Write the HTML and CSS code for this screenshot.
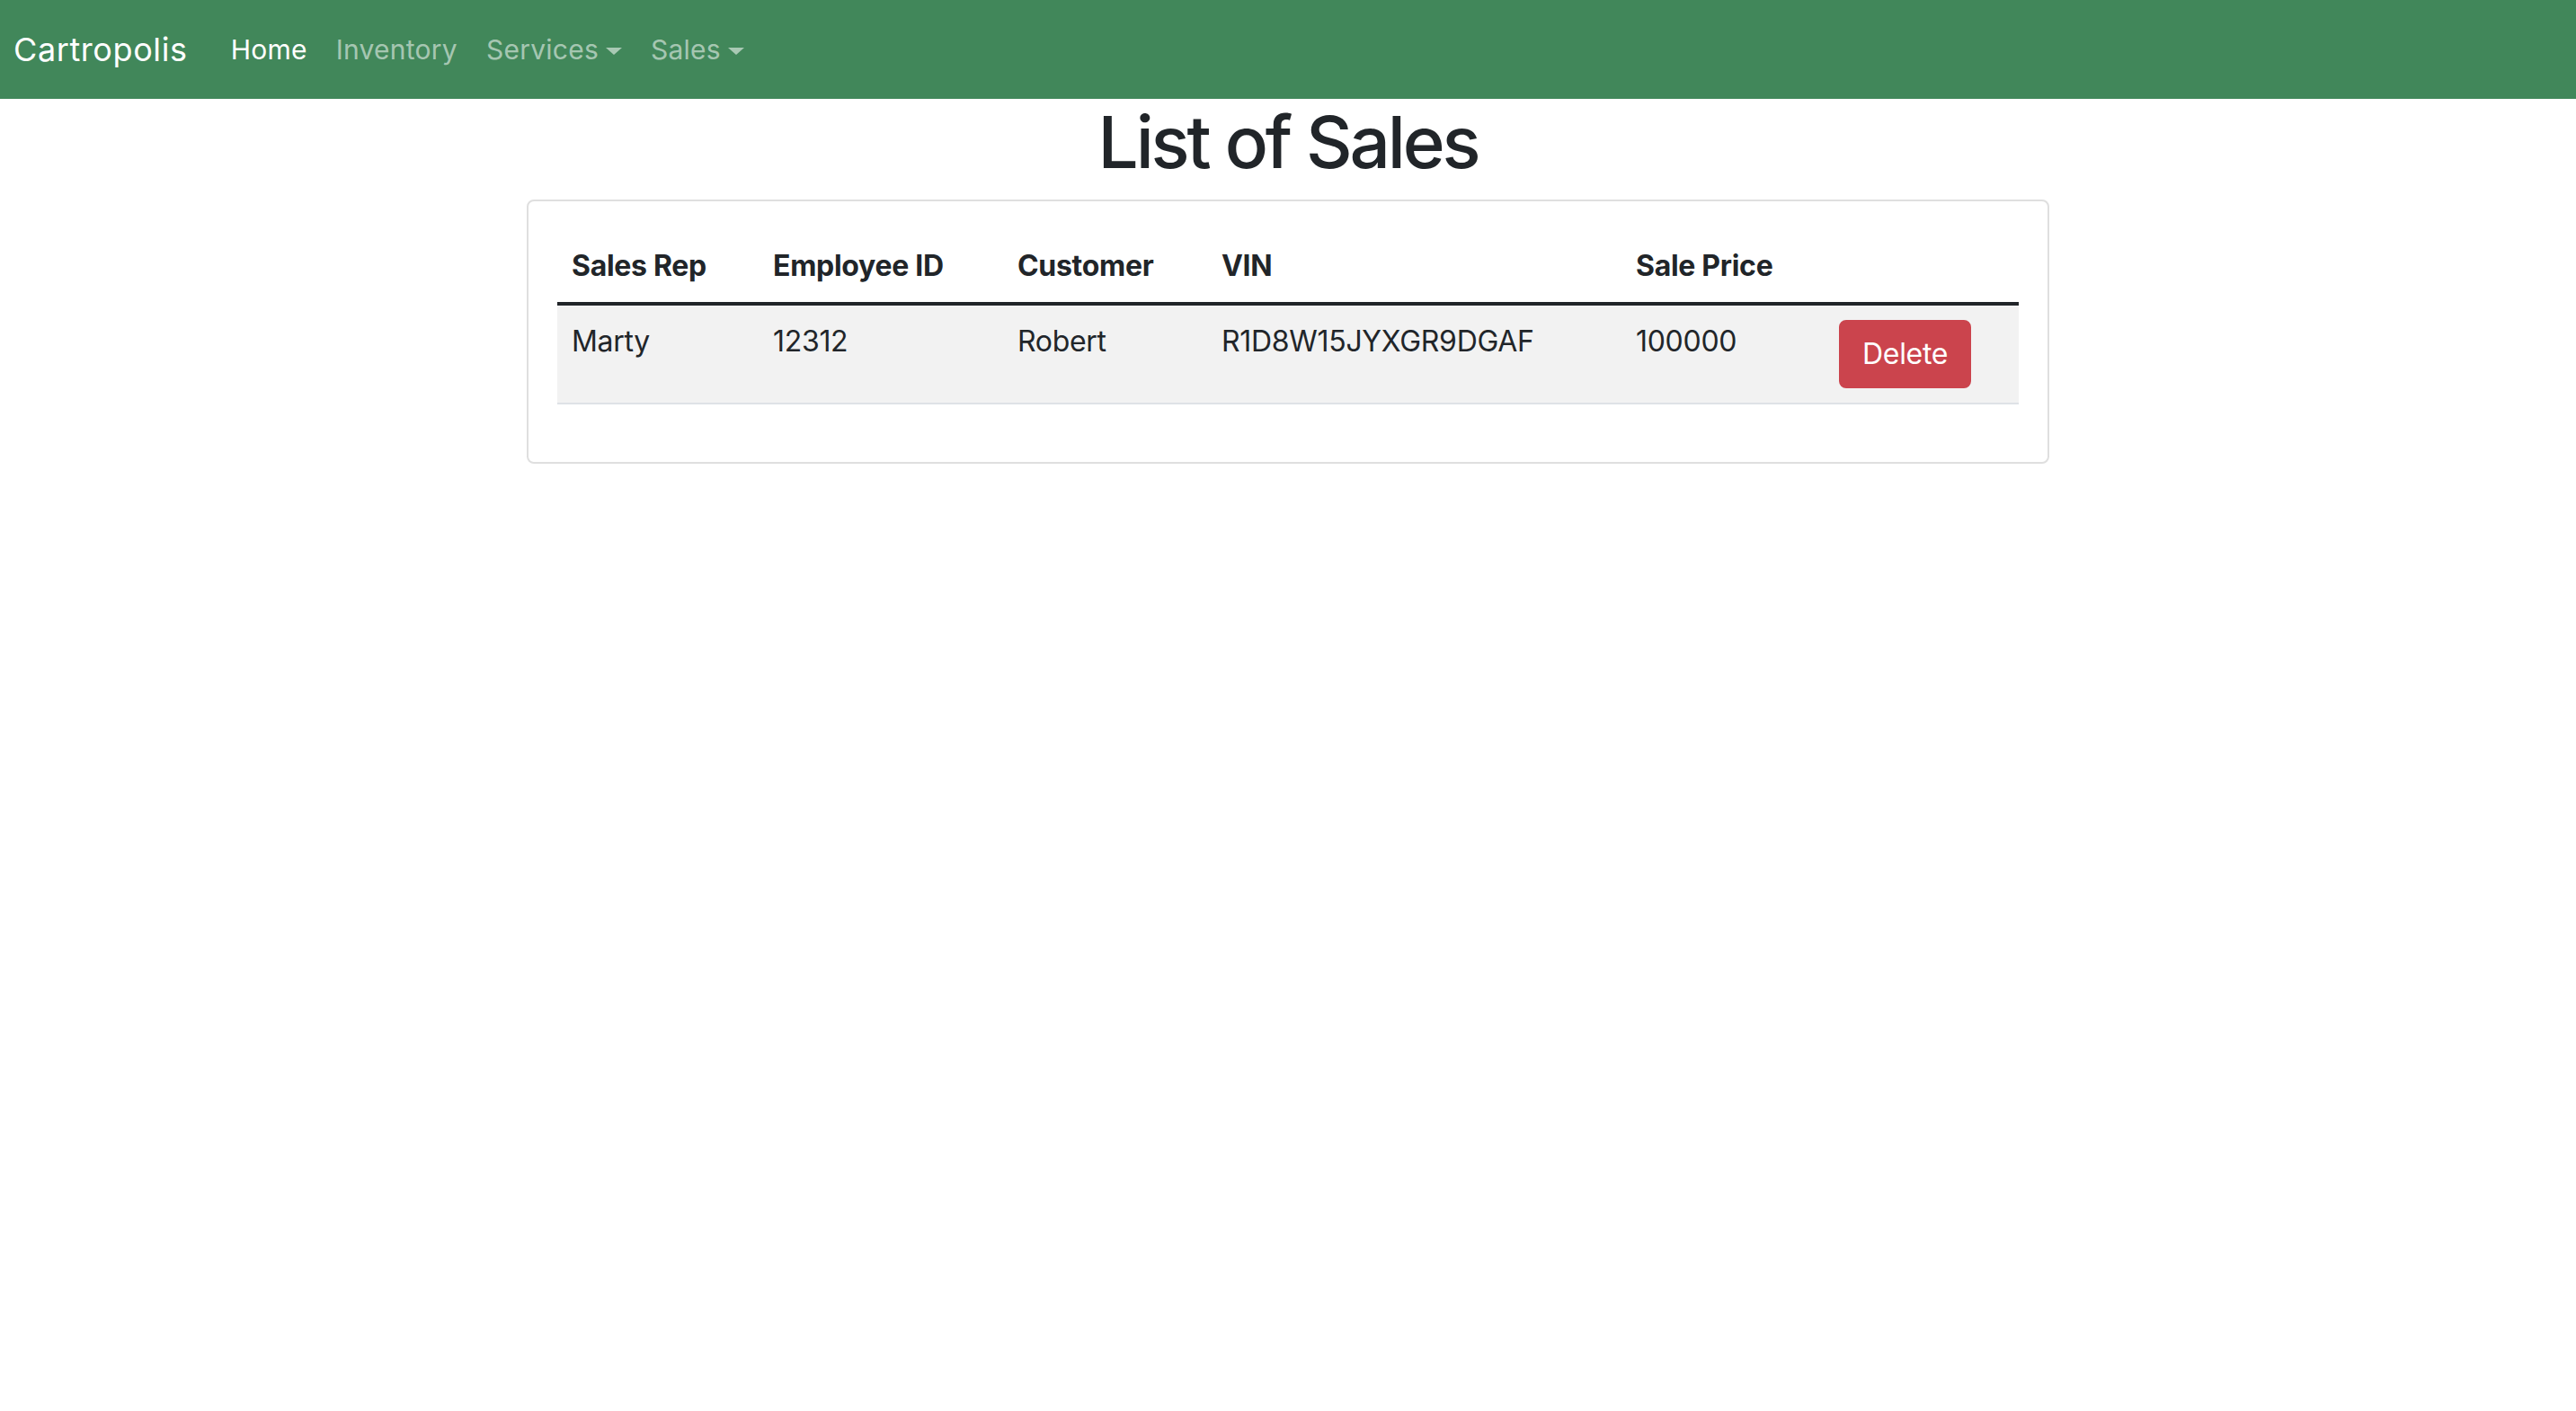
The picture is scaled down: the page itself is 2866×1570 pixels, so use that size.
FILE: index.html
```html
<!DOCTYPE html>
<html lang="en">
<head>
<meta charset="utf-8">
<title>Cartropolis</title>
<link rel="stylesheet" href="styles.css">
</head>
<body>
<nav class="navbar">
  <a class="brand" href="#">Cartropolis</a>
  <ul class="nav-links">
    <li><a class="nav-link active" href="#">Home</a></li>
    <li><a class="nav-link" href="#">Inventory</a></li>
    <li><a class="nav-link dropdown" href="#">Services</a></li>
    <li><a class="nav-link dropdown" href="#">Sales</a></li>
  </ul>
</nav>
<main class="main">
  <h1 class="title">List of Sales</h1>
  <div class="card">
    <table class="sales-table">
      <thead>
        <tr>
          <th class="col-rep">Sales Rep</th>
          <th class="col-emp">Employee ID</th>
          <th class="col-cust">Customer</th>
          <th class="col-vin">VIN</th>
          <th class="col-price">Sale Price</th>
          <th class="col-action"></th>
        </tr>
      </thead>
      <tbody>
        <tr>
          <td>Marty</td>
          <td>12312</td>
          <td>Robert</td>
          <td>R1D8W15JYXGR9DGAF</td>
          <td>100000</td>
          <td><button class="btn-delete" type="button">Delete</button></td>
        </tr>
      </tbody>
    </table>
  </div>
</main>
</body>
</html>
```
FILE: styles.css
```css
* { box-sizing: border-box; }

body {
  margin: 0;
  font-family: Inter, "Noto Sans", sans-serif;
  color: #212529;
  background: #fff;
}

.navbar {
  height: 110px;
  background: #41875a;
  display: flex;
  align-items: center;
  padding: 0 15px;
}

.brand {
  font-size: 36px;
  color: #fff;
  text-decoration: none;
  margin-right: 32px;
  letter-spacing: 0.6px;
}

.nav-links {
  list-style: none;
  display: flex;
  margin: 0;
  padding: 0;
}

.nav-link {
  display: block;
  font-size: 30px;
  padding: 0 16px;
  color: rgba(255, 255, 255, 0.55);
  text-decoration: none;
  letter-spacing: 0.25px;
}

.nav-link.active { color: #fff; }

.nav-link.dropdown::after {
  content: "";
  display: inline-block;
  margin-left: 8px;
  vertical-align: 5px;
  border-top: 8px solid;
  border-left: 9px solid transparent;
  border-right: 9px solid transparent;
}

.title {
  font-size: 80px;
  font-weight: 500;
  line-height: 96px;
  margin: 0 0 16px;
  text-align: center;
  letter-spacing: -3.2px;
}

.card {
  width: 1694px;
  margin: 0 auto;
  border: 2px solid #dfdfdf;
  border-radius: 8px;
  padding: 32px;
}

.sales-table {
  width: 100%;
  border-collapse: collapse;
  margin-bottom: 32px;
  font-size: 32px;
  line-height: 48px;
  letter-spacing: -0.3px;
}

.sales-table th {
  text-align: left;
  font-weight: 700;
  padding: 16px;
  vertical-align: bottom;
  border-bottom: 4px solid #212529;
}

.sales-table td {
  padding: 16px;
  background: #f2f2f2;
  border-bottom: 2px solid #dee2e6;
  vertical-align: top;
}

.col-rep { width: 224px; }
.col-emp { width: 272px; }
.col-cust { width: 227px; }
.col-vin { width: 461px; }
.col-price { width: 226px; }

.btn-delete {
  font-family: inherit;
  font-size: 32px;
  line-height: 48px;
  letter-spacing: -0.3px;
  padding: 12px 24px;
  color: #fff;
  background: #cb444d;
  border: 2px solid #cb444d;
  border-radius: 8px;
  cursor: pointer;
}
```
